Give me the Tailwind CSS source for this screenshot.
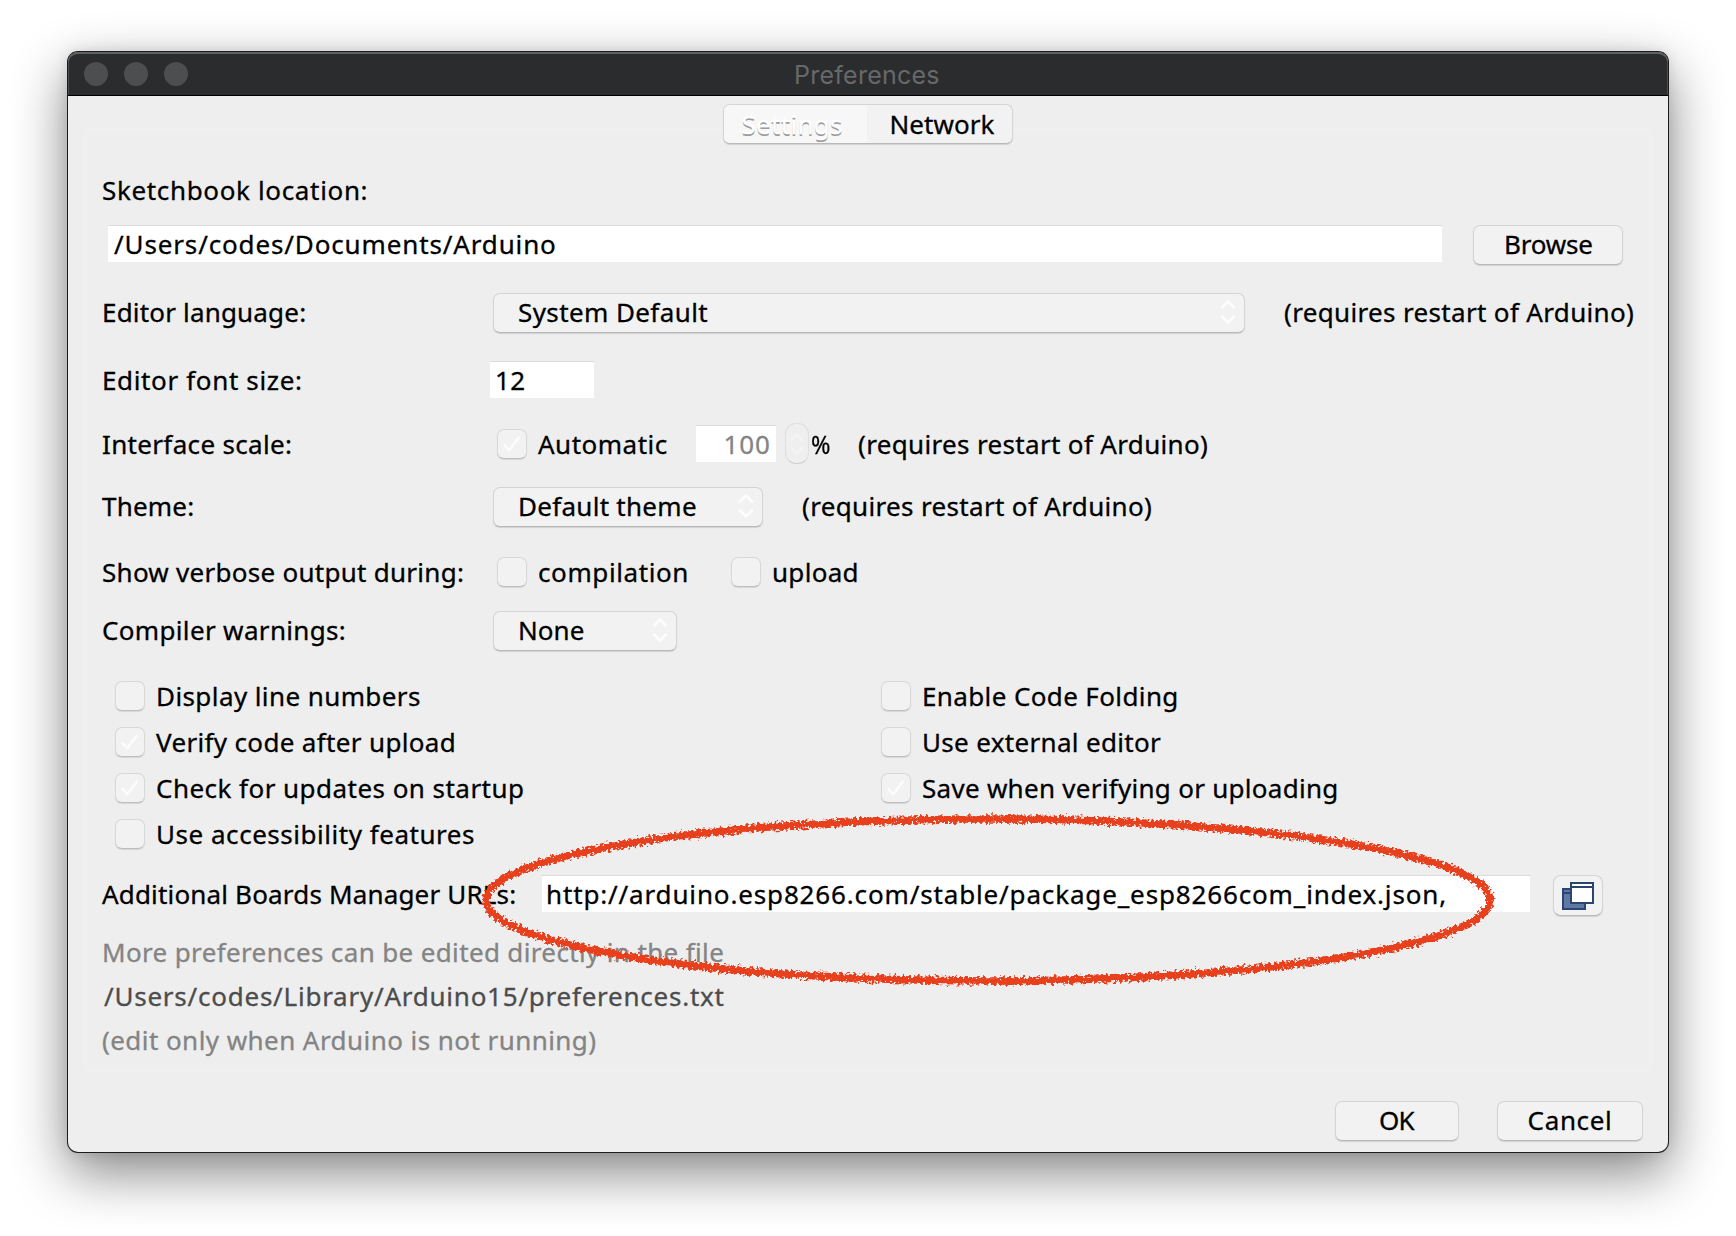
<!DOCTYPE html>
<html lang="en">
<head>
<meta charset="utf-8">
<title>Preferences</title>
<script src="https://cdn.jsdelivr.net/npm/@tailwindcss/browser@4"></script>
</head>
<body class="bg-white w-[1736px] h-[1236px] overflow-hidden">
<svg class="hidden">
  <symbol id="updown" viewBox="0 0 18 26"><path d="M3 8.5 9 2.5l6 6M3 17.5l6 6 6-6" fill="none" stroke="#fcfcfc" stroke-width="2.8" stroke-linecap="round" stroke-linejoin="round"/></symbol>
  <symbol id="check" viewBox="0 0 30 30"><path d="M7 16l5.2 5.5L22.3 8" fill="none" stroke="#fcfcfc" stroke-width="2.8" stroke-linecap="round" stroke-linejoin="round"/></symbol>
</svg>
<div class="relative pt-[51px] pl-[67px] w-[1736px] h-[1236px] font-['Noto_Sans',sans-serif] text-[26px] leading-[36px] text-black whitespace-nowrap">
  <div class="w-[1602px] h-[1102px] rounded-[11px] bg-[#1b1c1d] p-px shadow-[0_20px_54px_rgba(0,0,0,0.48),0_0_14px_rgba(0,0,0,0.10)]">
    <div class="flex flex-col h-[1100px] rounded-[10px] overflow-hidden bg-[#eeeeee]">
      <!-- title bar -->
      <div class="flex h-[44px] shrink-0 items-center bg-[#2b2c2e] rounded-t-[10px] border-b border-black shadow-[inset_0_2px_0_#5f6263,inset_1px_0_0_#4a4c4d,inset_-1px_0_0_#4a4c4d]">
        <div class="flex gap-4 pl-4 pt-px w-[727px]">
          <span class="size-6 rounded-full bg-[#4d4e50]"></span>
          <span class="size-6 rounded-full bg-[#4d4e50]"></span>
          <span class="size-6 rounded-full bg-[#4d4e50]"></span>
        </div>
        <span class="pt-[3px] -ml-px font-['Inter',sans-serif] text-[25px] tracking-[0.25px] text-[#67686a]">Preferences</span>
      </div>

      <!-- tabs -->
      <div class="relative z-10 mt-2 -ml-px flex h-[40px] w-[290px] self-center shrink-0 items-center rounded-[7px] overflow-hidden bg-[#f2f2f2] border border-[#d4d4d4] border-b-[#b9b9b9] shadow-[0_1px_1px_rgba(0,0,0,0.12)]">
        <span class="flex h-full w-[143px] items-center bg-[#f7f7f7] pl-[18px] pb-px text-white tracking-[0.3px] [-webkit-text-stroke:0.3px] text-shadow-[0_2px_0_#9c9c9c]">Settings</span>
        <span class="pl-[23px] pb-px tracking-[0.05px] [-webkit-text-stroke:0.3px]">Network</span>
      </div>

      <!-- settings panel -->
      <div class="-mt-4 mx-4 h-[944px] shrink-0 rounded-[8px] pl-[17px] pt-[44px] border border-[#f1f1f1] shadow-[inset_0_0_0_4px_#efefef] bg-[#eeeeee] [-webkit-text-stroke:0.3px]">
        <div class="-ml-px -mt-px flex flex-col">
          <div class="flex h-[36px] items-center pl-px tracking-[0.65px]">Sketchbook location:</div>

          <div class="mt-4 flex h-[40px] items-center">
            <div class="ml-[7px] mb-px flex h-[37px] w-[1334px] items-center border-t border-[#dcdcdc] bg-white pl-[6px] tracking-[0.86px]">/Users/codes/Documents/Arduino</div>
            <div class="ml-[31px] mt-px flex h-[40px] w-[150px] items-center rounded-[7px] bg-[#f2f2f2] border border-[#d4d4d4] border-b-[#b9b9b9] shadow-[0_1px_1px_rgba(0,0,0,0.12)] pl-[30px] pb-[2px] tracking-[-0.2px]">Browse</div>
          </div>

          <div class="mt-7 flex h-[40px] items-center">
            <span class="w-[392px] pl-px tracking-[0.18px]">Editor language:</span>
            <div class="mt-[2px] flex h-[40px] w-[752px] items-center rounded-[7px] bg-[#f2f2f2] border border-[#d4d4d4] border-b-[#b9b9b9] shadow-[0_1px_1px_rgba(0,0,0,0.12)] pl-[24px] pr-[7px] pb-[2px]">
              <span class="flex-1 tracking-[0.4px]">System Default</span>
              <svg class="w-[18px] h-[26px]"><use href="#updown"/></svg>
            </div>
            <span class="ml-[39px] tracking-[0.34px]">(requires restart of Arduino)</span>
          </div>

          <div class="mt-[29px] flex h-[38px] items-center">
            <span class="w-[389px] pl-px tracking-[0.64px]">Editor font size:</span>
            <div class="mb-px flex h-[37px] w-[104px] items-center border-t border-[#dcdcdc] bg-white pl-[5px] tracking-[0.4px]">12</div>
          </div>

          <div class="mt-6 flex h-[42px] items-center">
            <span class="w-[396px] pl-px tracking-[0.34px]">Interface scale:</span>
            <span class="size-[30px] rounded-[7px] bg-[#f2f2f2] border border-[#d8d8d8] border-b-[#bebebe] shadow-[0_1px_1px_rgba(0,0,0,0.10)]"><svg class="size-[28px]"><use href="#check"/></svg></span>
            <span class="ml-[11px] w-[158px] tracking-[0.5px]">Automatic</span>
            <div class="mb-px flex h-[37px] w-[80px] items-center justify-end border-t border-[#dcdcdc] bg-white pr-[5px] tracking-[1px] text-[#848484]">100</div>
            <span class="ml-[9px] mb-px flex h-[41px] w-[24px] items-center justify-center rounded-[11px] bg-[#efefef] border border-[#dfdfdf] border-b-[#d0d0d0]"><svg class="w-[16px] h-[26px] opacity-40"><use href="#updown"/></svg></span>
            <span class="ml-[2px] w-[47px]"><span class="inline-block origin-left scale-x-[0.9]">%</span></span>
            <span class="tracking-[0.34px]">(requires restart of Arduino)</span>
          </div>

          <div class="mt-[21px] flex h-[40px] items-center">
            <span class="w-[392px] pl-px tracking-[0.2px]">Theme:</span>
            <div class="mt-[2px] flex h-[40px] w-[270px] items-center rounded-[7px] bg-[#f2f2f2] border border-[#d4d4d4] border-b-[#b9b9b9] shadow-[0_1px_1px_rgba(0,0,0,0.12)] pl-[24px] pr-[7px] pb-[2px]">
              <span class="flex-1 tracking-[0.28px]">Default theme</span>
              <svg class="w-[18px] h-[26px]"><use href="#updown"/></svg>
            </div>
            <span class="ml-[39px] tracking-[0.34px]">(requires restart of Arduino)</span>
          </div>

          <div class="mt-7 flex h-[36px] items-center">
            <span class="w-[396px] pl-px tracking-[0.27px]">Show verbose output during:</span>
            <span class="size-[30px] rounded-[7px] bg-[#f2f2f2] border border-[#d8d8d8] border-b-[#bebebe] shadow-[0_1px_1px_rgba(0,0,0,0.10)]"></span>
            <span class="ml-[11px] w-[193px] tracking-[0.6px]">compilation</span>
            <span class="size-[30px] rounded-[7px] bg-[#f2f2f2] border border-[#d8d8d8] border-b-[#bebebe] shadow-[0_1px_1px_rgba(0,0,0,0.10)]"></span>
            <span class="ml-[11px] tracking-[0.3px]">upload</span>
          </div>

          <div class="mt-5 flex h-[40px] items-center">
            <span class="w-[392px] pl-px tracking-[0.34px]">Compiler warnings:</span>
            <div class="mt-[2px] flex h-[40px] w-[184px] items-center rounded-[7px] bg-[#f2f2f2] border border-[#d4d4d4] border-b-[#b9b9b9] shadow-[0_1px_1px_rgba(0,0,0,0.12)] pl-[24px] pr-[7px] pb-[2px]">
              <span class="flex-1 tracking-[0.05px]">None</span>
              <svg class="w-[18px] h-[26px]"><use href="#updown"/></svg>
            </div>
          </div>

          <!-- option checkboxes -->
          <div class="mt-[23px] ml-[14px] grid grid-cols-[766px_1fr] auto-rows-[46px]">
            <div class="flex items-center gap-[11px]"><span class="size-[30px] rounded-[7px] bg-[#f2f2f2] border border-[#d8d8d8] border-b-[#bebebe] shadow-[0_1px_1px_rgba(0,0,0,0.10)]"></span><span class="tracking-[0.41px]">Display line numbers</span></div>
            <div class="flex items-center gap-[11px]"><span class="size-[30px] rounded-[7px] bg-[#f2f2f2] border border-[#d8d8d8] border-b-[#bebebe] shadow-[0_1px_1px_rgba(0,0,0,0.10)]"></span><span class="tracking-[0.38px]">Enable Code Folding</span></div>
            <div class="flex items-center gap-[11px]"><span class="size-[30px] rounded-[7px] bg-[#f2f2f2] border border-[#d8d8d8] border-b-[#bebebe] shadow-[0_1px_1px_rgba(0,0,0,0.10)]"><svg class="size-[28px]"><use href="#check"/></svg></span><span class="tracking-[0.34px]">Verify code after upload</span></div>
            <div class="flex items-center gap-[11px]"><span class="size-[30px] rounded-[7px] bg-[#f2f2f2] border border-[#d8d8d8] border-b-[#bebebe] shadow-[0_1px_1px_rgba(0,0,0,0.10)]"></span><span class="tracking-[0.33px]">Use external editor</span></div>
            <div class="flex items-center gap-[11px]"><span class="size-[30px] rounded-[7px] bg-[#f2f2f2] border border-[#d8d8d8] border-b-[#bebebe] shadow-[0_1px_1px_rgba(0,0,0,0.10)]"><svg class="size-[28px]"><use href="#check"/></svg></span><span class="tracking-[0.46px]">Check for updates on startup</span></div>
            <div class="flex items-center gap-[11px]"><span class="size-[30px] rounded-[7px] bg-[#f2f2f2] border border-[#d8d8d8] border-b-[#bebebe] shadow-[0_1px_1px_rgba(0,0,0,0.10)]"><svg class="size-[28px]"><use href="#check"/></svg></span><span class="tracking-[0.28px]">Save when verifying or uploading</span></div>
            <div class="flex items-center gap-[11px]"><span class="size-[30px] rounded-[7px] bg-[#f2f2f2] border border-[#d8d8d8] border-b-[#bebebe] shadow-[0_1px_1px_rgba(0,0,0,0.10)]"></span><span class="tracking-[0.53px]">Use accessibility features</span></div>
          </div>

          <div class="mt-4 flex h-[42px] items-center">
            <span class="w-[441px] pl-px tracking-[0.17px]">Additional Boards Manager URLs:</span>
            <div class="mb-px flex h-[37px] w-[988px] items-center border-t border-[#dcdcdc] bg-white pl-[4px] tracking-[0.85px]">http://arduino.esp8266.com/stable/package_esp8266com_index.json,</div>
            <div class="ml-[23px] mt-[3px] flex h-[41px] w-[50px] items-center justify-center rounded-[8px] bg-[#f2f2f2] border border-[#d4d4d4] border-b-[#b9b9b9] shadow-[0_1px_1px_rgba(0,0,0,0.12)]">
              <svg class="w-[32px] h-[28px] -ml-px" viewBox="0 0 32 28">
                <rect x="1" y="7" width="22" height="20" fill="#6079a4" stroke="#2b4572" stroke-width="2"/>
                <path d="M2 11h20" stroke="#2b4572" stroke-width="2"/>
                <rect x="9" y="1" width="22" height="20" fill="#fff" stroke="#2b4572" stroke-width="2"/>
                <path d="M10 5h20" stroke="#2b4572" stroke-width="2"/>
              </svg>
            </div>
          </div>

          <div class="mt-[14px] flex h-[45px] items-center pl-px tracking-[0.36px] text-[#848484]">More preferences can be edited directly in the file</div>
          <div class="flex h-[44px] items-center pl-[3px] tracking-[0.76px] text-[#4c4c4c]">/Users/codes/Library/Arduino15/preferences.txt</div>
          <div class="flex h-[44px] items-center pl-px tracking-[0.44px] text-[#848484]">(edit only when Arduino is not running)</div>
        </div>
      </div>

      <!-- dialog buttons -->
      <div class="mt-[29px] flex shrink-0 justify-end gap-[38px] pr-[25px] [-webkit-text-stroke:0.3px]">
        <div class="flex h-[40px] w-[124px] items-center justify-center rounded-[7px] bg-[#f2f2f2] border border-[#d4d4d4] border-b-[#b9b9b9] shadow-[0_1px_1px_rgba(0,0,0,0.12)] pb-[2px] pr-px tracking-[-0.7px]">OK</div>
        <div class="flex h-[40px] w-[146px] items-center justify-center rounded-[7px] bg-[#f2f2f2] border border-[#d4d4d4] border-b-[#b9b9b9] shadow-[0_1px_1px_rgba(0,0,0,0.12)] pb-[2px] tracking-[0.65px]">Cancel</div>
      </div>
    </div>
  </div>

  <!-- hand-drawn highlight around the URL field -->
  <svg class="absolute left-0 top-0 w-[1736px] h-[1236px] pointer-events-none" viewBox="0 0 1736 1236">
    <filter id="crayon" filterUnits="userSpaceOnUse" x="460" y="790" width="1060" height="220">
      <feTurbulence type="fractalNoise" baseFrequency="0.35" numOctaves="3" seed="4" result="n"/>
      <feDisplacementMap in="SourceGraphic" in2="n" scale="9" xChannelSelector="R" yChannelSelector="G"/>
    </filter>
    <ellipse cx="988" cy="900" rx="502" ry="81" fill="none" stroke="#e83f1e" stroke-width="7.5" filter="url(#crayon)"/>
  </svg>
</div>
</body>
</html>
